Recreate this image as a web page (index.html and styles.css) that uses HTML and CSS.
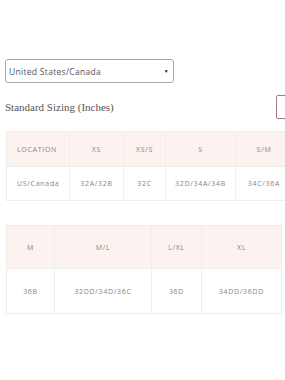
FILE: index.html
```html
<!DOCTYPE html>
<html lang="en">
<head>
    <meta charset="UTF-8">
    <meta name="viewport" content="width=device-width, initial-scale=1.0">
    <title>Size Guide</title>
    <link rel="stylesheet" href="styles.css">
</head>
<body>
    <div class="page">
        <div class="region-select">
            <span>United States/Canada</span>
            <span class="arrow">&#9660;</span>
        </div>

        <div class="title-row">
            <h2 class="title">Standard Sizing (Inches)</h2>
            <button class="unit-toggle"></button>
        </div>

        <div class="table-wrap">
            <table class="size-table wide">
                <tr class="head">
                    <th class="c-loc left">LOCATION</th>
                    <th class="c-xs">XS</th>
                    <th class="c-xss">XS/S</th>
                    <th class="c-s">S</th>
                    <th class="c-sm">S/M</th>
                </tr>
                <tr>
                    <td class="left">US/Canada</td>
                    <td>32A/32B</td>
                    <td>32C</td>
                    <td>32D/34A/34B</td>
                    <td>34C/36A</td>
                </tr>
            </table>
        </div>

        <div class="table-wrap second">
            <table class="size-table tall">
                <tr class="head">
                    <th class="c-m">M</th>
                    <th class="c-ml">M/L</th>
                    <th class="c-lxl">L/XL</th>
                    <th class="c-xl">XL</th>
                </tr>
                <tr>
                    <td>36B</td>
                    <td>32DD/34D/36C</td>
                    <td>36D</td>
                    <td>34DD/36DD</td>
                </tr>
            </table>
        </div>
    </div>
</body>
</html>
```

FILE: styles.css
```css
body {
    margin: 0;
    padding: 0;
    background-color: #fff;
    font-family: "Open Sans", Arial, sans-serif;
    overflow: hidden;
}
.page {
    width: 285px;
    overflow: hidden;
    padding: 59px 0 0 5px;
    box-sizing: border-box;
}
.region-select {
    box-sizing: border-box;
    width: 169px;
    height: 24px;
    border: 1px solid #a9a9a9;
    border-radius: 3px;
    display: flex;
    align-items: center;
    justify-content: space-between;
    padding: 0 4px 0 3px;
    font-size: 8.5px;
    letter-spacing: 0.3px;
    color: #555;
}
.region-select .arrow {
    font-size: 5px;
    color: #111;
}
.title-row {
    display: flex;
    justify-content: space-between;
    align-items: center;
    width: 305px;
    margin-top: 12px;
}
.title {
    margin: 0;
    font-family: "Liberation Serif", serif;
    font-weight: normal;
    font-size: 11px;
    color: #555;
}
.unit-toggle {
    flex: none;
    width: 34px;
    height: 24px;
    border: 1px solid #a07a88;
    border-radius: 2px;
    background: #fff;
}
.table-wrap {
    margin: 12px 0 0 1px;
}
.table-wrap.second {
    margin-top: 24px;
}
.size-table {
    border-collapse: collapse;
    table-layout: fixed;
    font-size: 7px;
    letter-spacing: 0.7px;
    color: #858585;
}
.size-table.wide { width: 271px; }
.size-table.tall { width: 271px; }
.size-table th,
.size-table td {
    border: 1px solid #eee;
    text-align: center;
    font-weight: normal;
    padding: 0;
    white-space: nowrap;
}
.size-table .head th {
    background-color: #fcf2f0;
}
.size-table .left {
    text-align: left;
    padding-left: 10px;
}
.wide th { height: 34px; }
.wide td { height: 33px; }
.tall th { height: 42px; }
.tall td { height: 44px; }

/* first column width excludes its 10px left padding */
.c-loc { width: 52px; }
.c-xs { width: 53px; }
.c-xss { width: 41px; }
.c-s { width: 69px; }
.c-sm { width: 56px; }

.c-m { width: 47px; }
.c-ml { width: 96px; }
.c-lxl { width: 49px; }
.c-xl { width: 79px; }
```
